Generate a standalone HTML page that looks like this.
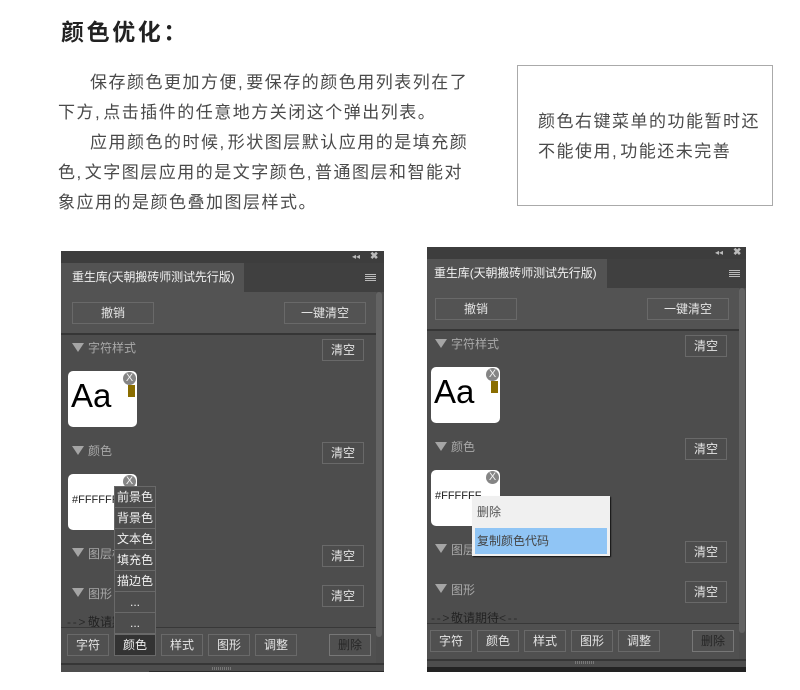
<!DOCTYPE html>
<html lang="zh-CN">
<head>
<meta charset="utf-8">
<title>颜色优化</title>
<style>
html,body{margin:0;padding:0;background:#fff}
body{position:relative;width:800px;height:690px;overflow:hidden;font-family:"Liberation Sans","WenQuanYi Zen Hei","Noto Sans CJK SC",sans-serif}
div,span{position:absolute;box-sizing:border-box;white-space:nowrap}
i{font-style:normal;letter-spacing:3.5px}
.h{left:61px;top:15px;font-family:"Liberation Sans","Noto Sans CJK SC",sans-serif;font-size:23px;line-height:34px;font-weight:700;letter-spacing:2.6px;color:#222}
.t{font-size:17px;line-height:30px;height:30px;letter-spacing:1.5px;color:#4a4a4a}
.box{left:517px;top:65px;width:256px;height:141px;border:1px solid #aaa;background:#fff}
.p{background:#4d4d4d}
.bar{background:#3d3d3d}
.tabbar{background:#404040}
.tab{background:#535353;color:#f0f0f0;font-size:12px;line-height:28px;padding-left:11px;letter-spacing:-.1px}
.top{background:#535353}
.ln{background:#363636;height:2px}
.b{border:1px solid #696969;color:#e4e4e4;font-size:12px;text-align:center;width:42px;height:22px;line-height:20px}
.w{width:82px}
.sec{color:#a8a8a8;font-size:12px;line-height:16px;height:16px}
.tri{width:0;height:0;border-left:6px solid transparent;border-right:6px solid transparent;border-top:9px solid #a5a5a5}
.card{background:#fff;width:69px;height:56px;border-radius:5px}
.x{width:13px;height:13px;border-radius:50%;background:#858585;color:#f2f2f2;font-size:11px;line-height:13px;text-align:center}
.au{background:#8a6d00;width:7px;height:12px}
.aa{color:#000;font-size:33px;line-height:40px}
.hex{color:#222;font-size:11px;line-height:14px}
.sb{background:#636363;width:6px;border-radius:3px}
.m{left:114px;width:42px;height:22px;border:1px solid #696969;background:#4d4d4d;color:#f0f0f0;font-size:12px;line-height:20px;text-align:center}
.wait{color:#222;font-size:12px;line-height:14px}
.dash{letter-spacing:1.7px;color:#2a2a2a}
.del{color:#262626}
.grip{height:3px;background:repeating-linear-gradient(90deg,#777 0 1px,transparent 1px 2px)}
.hb{height:1px;width:11px;background:#bbb}
</style>
</head>
<body>
<div class="h">颜色优化：</div>
<div class="t" style="left:90px;top:68px">保存颜色更加方便<i>,</i>要保存的颜色用列表列在了</div>
<div class="t" style="left:58px;top:98px">下方<i>,</i>点击插件的任意地方关闭这个弹出列表。</div>
<div class="t" style="left:90px;top:128px">应用颜色的时候<i>,</i>形状图层默认应用的是填充颜</div>
<div class="t" style="left:58px;top:158px">色<i>,</i>文字图层应用的是文字颜色<i>,</i>普通图层和智能对</div>
<div class="t" style="left:58px;top:188px">象应用的是颜色叠加图层样式。</div>
<div class="box"></div>
<div class="t" style="left:538px;top:107px">颜色右键菜单的功能暂时还</div>
<div class="t" style="left:538px;top:137px">不能使用<i>,</i>功能还未完善</div>

<!-- left panel -->
<div class="p" style="left:61px;top:251px;width:323px;height:421px"></div>
<div class="bar" style="left:61px;top:251px;width:323px;height:12px"></div>
<div class="tabbar" style="left:61px;top:263px;width:323px;height:29px"></div>
<div class="tab" style="left:61px;top:263px;width:183px;height:29px">重生库(天朝搬砖师测试先行版)</div>
<div class="top" style="left:61px;top:292px;width:315px;height:42px"></div>
<div class="ln" style="left:61px;top:333px;width:315px"></div>
<div class="sb" style="left:376px;top:292px;height:345px"></div>
<div style="left:352px;top:252px;color:#bbb;font-size:8px;line-height:10px">◂◂</div>
<div style="left:370px;top:252px;color:#bbb;font-size:10px;line-height:10px;font-weight:700">✖</div>
<div class="hb" style="left:365px;top:274px"></div><div class="hb" style="left:365px;top:276px"></div><div class="hb" style="left:365px;top:278px"></div><div class="hb" style="left:365px;top:280px"></div>
<div class="b w" style="left:72px;top:302px">撤销</div>
<div class="b w" style="left:284px;top:302px">一键清空</div>

<div class="tri" style="left:72px;top:343px"></div>
<div class="sec" style="left:88px;top:340px">字符样式</div>
<div class="b" style="left:322px;top:339px">清空</div>
<div class="card" style="left:68px;top:371px"></div>
<div class="aa" style="left:71px;top:376px">Aa</div>
<div class="x" style="left:123px;top:372px">X</div>
<div class="au" style="left:128px;top:385px"></div>

<div class="tri" style="left:72px;top:446px"></div>
<div class="sec" style="left:88px;top:443px">颜色</div>
<div class="b" style="left:322px;top:442px">清空</div>
<div class="card" style="left:68px;top:474px"></div>
<div class="hex" style="left:72px;top:493px">#FFFFFF</div>
<div class="x" style="left:123px;top:475px">X</div>

<div class="tri" style="left:72px;top:548px"></div>
<div class="sec" style="left:88px;top:546px">图层样式</div>
<div class="b" style="left:322px;top:545px">清空</div>
<div class="tri" style="left:72px;top:588px"></div>
<div class="sec" style="left:88px;top:586px">图形</div>
<div class="b" style="left:322px;top:585px">清空</div>
<div class="wait dash" style="left:67px;top:615px">--&gt;</div>
<div class="wait" style="left:88px;top:615px">敬请期待</div>
<div class="wait dash" style="left:136px;top:615px">&lt;--</div>

<div style="left:61px;top:627px;width:315px;height:1px;background:#383838"></div>
<div style="left:61px;top:628px;width:315px;height:35px;background:#505050"></div>
<div style="left:61px;top:663px;width:323px;height:2px;background:#363636"></div>
<div class="grip" style="left:212px;top:667px;width:20px"></div>
<div style="left:149px;top:671px;width:235px;height:1px;background:#2a2a2a"></div>

<div class="b" style="left:67px;top:634px">字符</div>
<div class="b" style="left:114px;top:634px;background:#333;color:#eee">颜色</div>
<div class="b" style="left:161px;top:634px">样式</div>
<div class="b" style="left:208px;top:634px">图形</div>
<div class="b" style="left:255px;top:634px">调整</div>
<div class="b del" style="left:329px;top:634px;border-color:#777">删除</div>

<div class="m" style="top:486px">前景色</div>
<div class="m" style="top:507px">背景色</div>
<div class="m" style="top:528px">文本色</div>
<div class="m" style="top:549px">填充色</div>
<div class="m" style="top:570px">描边色</div>
<div class="m" style="top:591px">...</div>
<div class="m" style="top:612px">...</div>

<!-- right panel -->
<div class="p" style="left:427px;top:247px;width:319px;height:425px"></div>
<div class="bar" style="left:427px;top:247px;width:319px;height:12px"></div>
<div class="tabbar" style="left:427px;top:259px;width:319px;height:29px"></div>
<div class="tab" style="left:427px;top:259px;width:180px;height:29px;padding-left:7px">重生库(天朝搬砖师测试先行版)</div>
<div class="top" style="left:427px;top:288px;width:312px;height:42px"></div>
<div class="ln" style="left:427px;top:329px;width:312px"></div>
<div class="sb" style="left:739px;top:288px;height:345px"></div>
<div style="left:715px;top:248px;color:#bbb;font-size:8px;line-height:10px">◂◂</div>
<div style="left:733px;top:248px;color:#bbb;font-size:10px;line-height:10px;font-weight:700">✖</div>
<div class="hb" style="left:729px;top:270px"></div><div class="hb" style="left:729px;top:272px"></div><div class="hb" style="left:729px;top:274px"></div><div class="hb" style="left:729px;top:276px"></div>
<div class="b w" style="left:435px;top:298px">撤销</div>
<div class="b w" style="left:647px;top:298px">一键清空</div>

<div class="tri" style="left:435px;top:339px"></div>
<div class="sec" style="left:451px;top:336px">字符样式</div>
<div class="b" style="left:685px;top:335px">清空</div>
<div class="card" style="left:431px;top:367px"></div>
<div class="aa" style="left:434px;top:372px">Aa</div>
<div class="x" style="left:486px;top:368px">X</div>
<div class="au" style="left:491px;top:381px"></div>

<div class="tri" style="left:435px;top:442px"></div>
<div class="sec" style="left:451px;top:439px">颜色</div>
<div class="b" style="left:685px;top:438px">清空</div>
<div class="card" style="left:431px;top:470px"></div>
<div class="hex" style="left:435px;top:489px">#FFFFFF</div>
<div class="x" style="left:486px;top:471px">X</div>

<div class="tri" style="left:435px;top:544px"></div>
<div class="sec" style="left:451px;top:542px">图层样式</div>
<div class="b" style="left:685px;top:541px">清空</div>
<div class="tri" style="left:435px;top:584px"></div>
<div class="sec" style="left:451px;top:582px">图形</div>
<div class="b" style="left:685px;top:581px">清空</div>
<div class="wait dash" style="left:431px;top:611px">--&gt;</div>
<div class="wait" style="left:451px;top:611px">敬请期待</div>
<div class="wait dash" style="left:499px;top:611px">&lt;--</div>

<div style="left:427px;top:623px;width:312px;height:1px;background:#383838"></div>
<div style="left:427px;top:624px;width:312px;height:35px;background:#505050"></div>
<div style="left:427px;top:659px;width:319px;height:2px;background:#363636"></div>
<div class="grip" style="left:575px;top:661px;width:20px"></div>
<div style="left:427px;top:667px;width:319px;height:5px;background:#222"></div>

<div class="b" style="left:430px;top:630px">字符</div>
<div class="b" style="left:477px;top:630px">颜色</div>
<div class="b" style="left:524px;top:630px">样式</div>
<div class="b" style="left:571px;top:630px">图形</div>
<div class="b" style="left:618px;top:630px">调整</div>
<div class="b del" style="left:692px;top:630px;border-color:#777">删除</div>

<div style="left:472px;top:496px;width:138px;height:60px;background:#f0f0f0;box-shadow:1px 1px 1px #111"></div>
<div style="left:475px;top:528px;width:132px;height:26px;background:#90c5f5"></div>
<div style="left:477px;top:504px;font-size:12px;line-height:16px;color:#555">删除</div>
<div style="left:477px;top:533px;font-size:12px;line-height:16px;color:#444">复制颜色代码</div>
</body>
</html>
